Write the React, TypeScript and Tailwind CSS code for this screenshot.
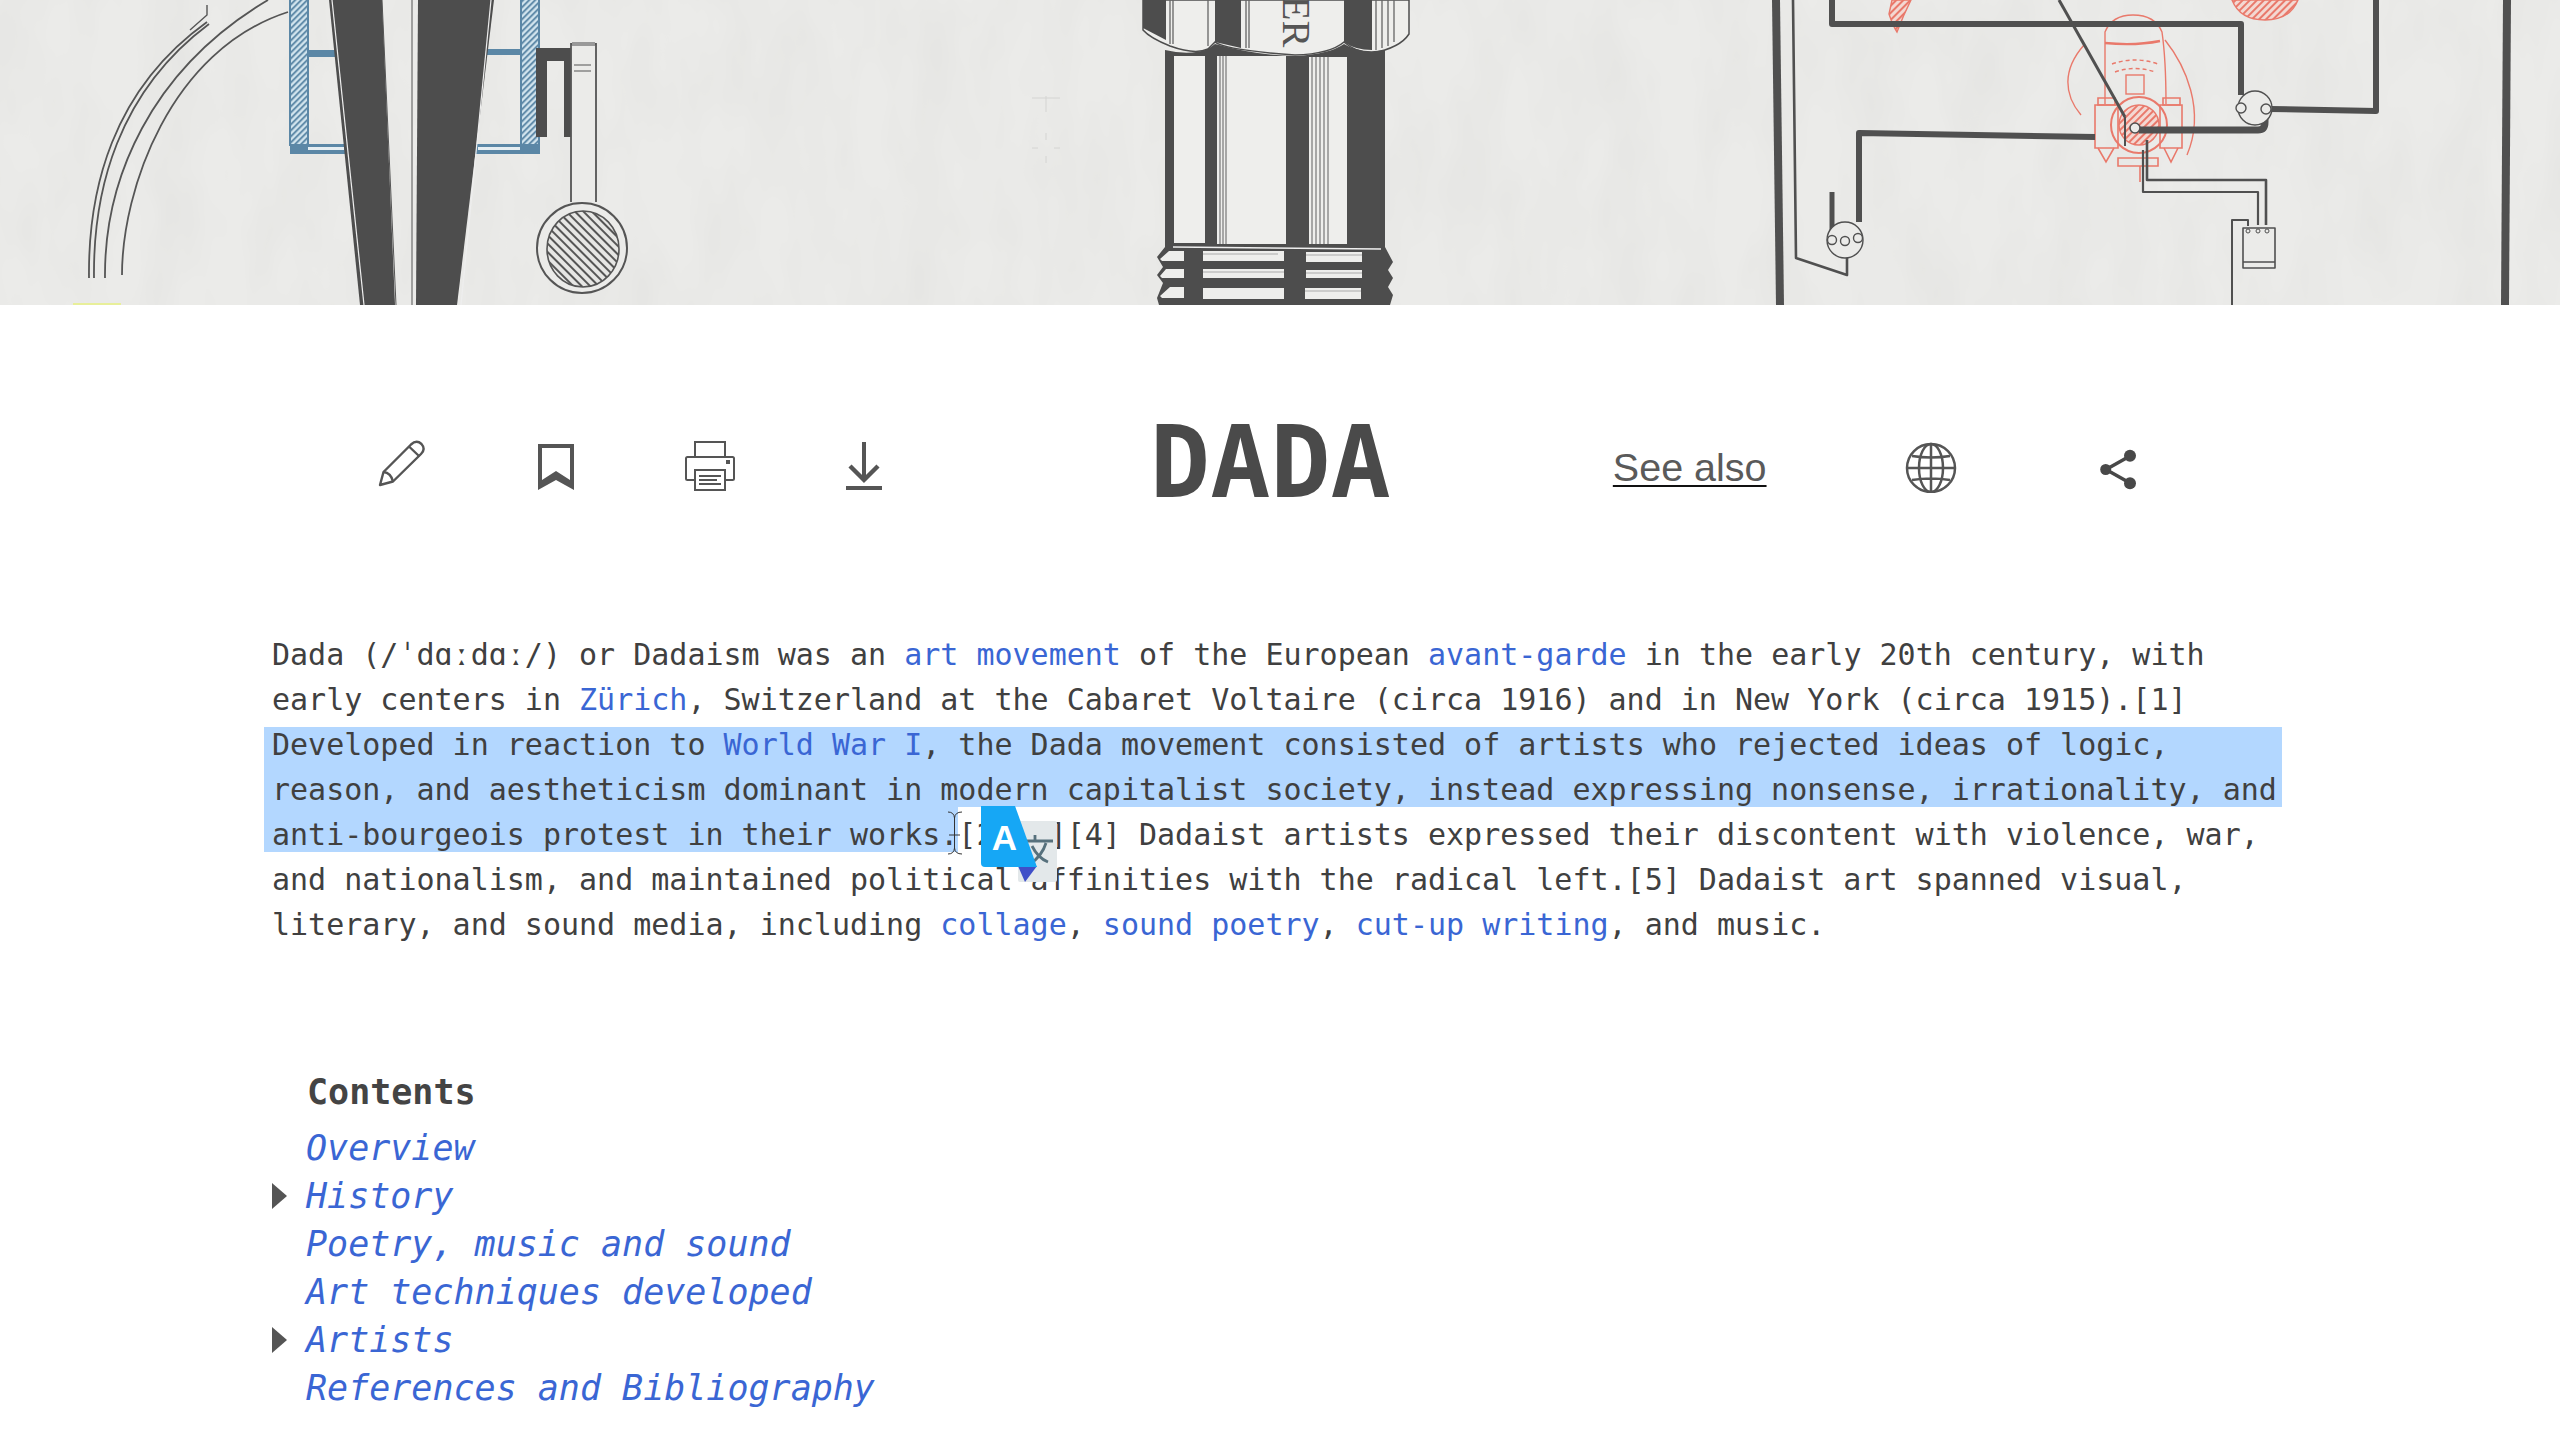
import React from "react";

const DARK = "#4d4d4d";
const RED = "#e9796b";

function Banner() {
  return (
    <svg className="block w-full h-[305px]" viewBox="0 0 2560 305" fill="none">
      <defs>
        <filter id="paper" x="0" y="0" width="100%" height="100%">
          <feTurbulence type="fractalNoise" baseFrequency="0.02 0.008" numOctaves="3" seed="4" />
          <feColorMatrix values="0 0 0 0 0.6  0 0 0 0 0.6  0 0 0 0 0.58  0.3 0 0 0 -0.1" />
        </filter>
        <pattern id="blueHatch" width="7" height="6" patternUnits="userSpaceOnUse" patternTransform="skewY(-45)">
          <rect width="7" height="6" fill="#cfe2ec" />
          <rect width="7" height="2.6" fill="#5b87a6" />
        </pattern>
        <pattern id="ovalHatch" width="6" height="6" patternUnits="userSpaceOnUse" patternTransform="rotate(45)">
          <rect width="6" height="6" fill="#e6e6e4" />
          <rect width="6" height="2" fill="#555" />
        </pattern>
        <pattern id="redHatch" width="5" height="5" patternUnits="userSpaceOnUse" patternTransform="rotate(-45)">
          <rect width="5" height="5" fill="#f3d8d2" />
          <rect width="5" height="2" fill={RED} />
        </pattern>
      </defs>
      <rect width="2560" height="305" fill="#ebebe9" />
      <rect width="2560" height="305" filter="url(#paper)" />

      {/* left: curved pipes */}
      <g stroke="#555" strokeWidth="1.8">
        <path d="M89 278C88 190 112 90 207 22" />
        <path d="M94 278C93 190 118 92 209 24" />
        <path d="M105 278C104 180 150 70 268 0" />
        <path d="M122 275C122 190 170 50 288 12" />
        <path d="M207 5V15L190 30" strokeWidth="1.4" />
      </g>

      {/* left: blue housing */}
      <rect x="290" y="-2" width="18" height="147" fill="url(#blueHatch)" stroke="#5b87a6" strokeWidth="2" />
      <rect x="521" y="-2" width="18" height="147" fill="url(#blueHatch)" stroke="#5b87a6" strokeWidth="2" />
      <rect x="308" y="50" width="30" height="7" fill="#5b87a6" />
      <rect x="485" y="49" width="36" height="6" fill="#5b87a6" />
      <rect x="290" y="144" width="60" height="10" fill="#5b87a6" />
      <rect x="475" y="144" width="65" height="10" fill="#5b87a6" />
      <rect x="308" y="147" width="36" height="3" fill="#e6eef2" />
      <rect x="478" y="147" width="42" height="3" fill="#e6eef2" />

      {/* left: wedges */}
      <path d="M329 0H382L395 305H360Z" fill={DARK} />
      <path d="M418 0H494L457 305H416Z" fill={DARK} />
      <path d="M332 0L364 305" stroke="#eee" strokeWidth="1.2" />
      <path d="M491 0L461 305" stroke="#eee" strokeWidth="1.2" />
      <path d="M382 0L396 305M412 0V305" stroke="#555" strokeWidth="1" />

      {/* left: lever */}
      <path d="M536 48H572V137H564V61H547V137H536Z" fill={DARK} />
      <path d="M571 202V44H596V202" stroke="#555" strokeWidth="1.8" fill="#ebebe9" />
      <path d="M572 44H595" stroke="#999" strokeWidth="4" />
      <path d="M574 65H591M574 71H591" stroke="#555" strokeWidth="1.2" />
      <ellipse cx="582" cy="248" rx="45" ry="45" stroke="#555" strokeWidth="2" fill="#ebebe9" />
      <ellipse cx="583" cy="249" rx="36" ry="38" fill="url(#ovalHatch)" stroke="#555" strokeWidth="1.6" />
      <rect x="73" y="303" width="48" height="2" fill="#e8ef9a" />

      {/* centre: nut */}
      <path d="M1143 0V30Q1150 38 1170 46Q1195 55 1208 49L1215 42Q1225 50 1295 55Q1330 54 1344 42Q1355 52 1372 53Q1400 48 1409 34V0Z" fill="#eeeeec" stroke={DARK} strokeWidth="1.5" />
      <path d="M1143 0H1166V40L1143 28Z" fill={DARK} />
      <path d="M1215 0H1241V48L1215 42Z" fill={DARK} />
      <path d="M1344 0H1372V50Q1355 50 1344 42Z" fill={DARK} />
      <path d="M1170 0V44M1173 0V44M1246 0V48M1249 0V48M1376 0V50M1382 0V48M1388 0V46M1394 0V42M1208 0V46" stroke="#666" strokeWidth="1.3" />
      <text transform="translate(1283 -4) rotate(90)" fontFamily="'Liberation Serif', serif" fontSize="40" fill="#555">ER</text>

      {/* centre: column */}
      <path d="M1165 50Q1190 56 1208 49L1215 44Q1260 56 1295 56Q1330 54 1344 44Q1360 54 1385 50V248H1165Z" fill={DARK} />
      <rect x="1174" y="56" width="31" height="187" fill="#eeeeec" />
      <rect x="1217" y="56" width="69" height="188" fill="#eeeeec" />
      <rect x="1309" y="57" width="38" height="187" fill="#eeeeec" />
      <path d="M1220 56V244M1223 56V244M1226 56V244M1312 57V244M1316 57V244M1320 57V244M1324 57V244M1328 57V244" stroke="#777" strokeWidth="1.2" />

      {/* centre: thread */}
      <path d="M1165 247H1385L1393 262L1388 270L1393 278L1388 287L1393 295L1390 305H1159L1157 298L1163 283L1157 275L1163 267L1157 257Z" fill={DARK} />
      <path d="M1173 247L1381 249" stroke="#eee" strokeWidth="1.5" />
      <path d="M1160 259L1169 251H1184V261H1162ZM1160 276L1166 269H1184V278H1162ZM1160 296L1170 287H1184V298H1162Z" fill="#eeeeec" />
      <rect x="1203" y="251" width="81" height="10" fill="#eeeeec" />
      <rect x="1203" y="269" width="81" height="9" fill="#eeeeec" />
      <rect x="1203" y="288" width="81" height="11" fill="#eeeeec" />
      <rect x="1306" y="252" width="56" height="10" fill="#eeeeec" />
      <rect x="1306" y="270" width="56" height="8" fill="#eeeeec" />
      <rect x="1305" y="288" width="56" height="11" fill="#eeeeec" />
      <path d="M1203 254H1278M1203 272H1284M1306 255H1362M1306 273H1362M1305 291H1361" stroke="#aaa" strokeWidth="1" />
      <path d="M1046 96V112M1032 98H1060M1046 133V140M1032 148H1038M1054 148H1060M1046 156V163" stroke="#d4d4d2" strokeWidth="1" />

      {/* right: red engine */}
      <g stroke={RED} strokeWidth="1.4">
        <path d="M1889 14Q1893 26 1897 32Q1903 16 1911 0H1892Z" fill="url(#redHatch)" />
        <path d="M2232 0Q2240 20 2265 20Q2290 20 2298 0Z" fill="url(#redHatch)" />
        <path d="M2105 104V32Q2112 15 2133 15Q2155 15 2162 32Q2166 60 2166 104" />
        <path d="M2105 43Q2135 46 2160 41" strokeWidth="2.4" />
        <path d="M2084 45C2062 70 2064 95 2081 115" />
        <path d="M2165 40C2185 65 2206 110 2187 155" />
        <path d="M2112 64Q2135 56 2158 64M2115 72Q2135 65 2155 72" strokeDasharray="4 3" />
        <rect x="2126" y="75" width="18" height="19" />
        <circle cx="2139" cy="125" r="28" fill="#ebebe9" strokeWidth="2" />
        <circle cx="2139" cy="125" r="20" fill="url(#redHatch)" />
        <path d="M2095 105H2118V148H2095ZM2160 105H2182V148H2160Z" strokeWidth="1.6" />
        <path d="M2098 105H2115V98H2098ZM2163 105H2180V98H2163ZM2098 148L2106 162L2114 148M2164 148L2171 162L2178 148" strokeWidth="1.6" />
        <path d="M2118 158H2158V166H2118ZM2140 166V182" strokeWidth="1.6" />
      </g>

      {/* right: wiring */}
      <g stroke="#505050" strokeLinejoin="round">
        <path d="M1776 0L1780 305" strokeWidth="8" />
        <path d="M2507 0L2505 305" strokeWidth="8" />
        <path d="M1793 0L1796 258L1847 275V257" strokeWidth="2.6" />
        <path d="M1832 0V24H2241V95" strokeWidth="6" />
        <path d="M2376 0V111L2270 109" strokeWidth="6" />
        <path d="M2059 0L2125 117" strokeWidth="3" />
        <path d="M2095 137L1859 133V222" strokeWidth="6" />
        <path d="M2139 130H2258Q2265 130 2265 122V112" strokeWidth="7" />
        <path d="M2125 117V146" strokeWidth="2" />
        <path d="M2147 140V180H2266V225" strokeWidth="2.6" />
        <path d="M2143 150V192H2258V225" strokeWidth="2.2" />
        <path d="M1832 192V235" strokeWidth="5" />
        <path d="M2248 226V220H2232V305" strokeWidth="2" />
        <path d="M2243 228H2275V268H2243ZM2243 262H2275" strokeWidth="1.6" fill="#ebebe9" />
        <circle cx="2248" cy="231" r="2" strokeWidth="1" fill="#ebebe9" />
        <circle cx="2258" cy="231" r="2" strokeWidth="1" fill="#ebebe9" />
        <circle cx="2267" cy="231" r="2" strokeWidth="1" fill="#ebebe9" />
        <circle cx="1845" cy="240" r="18" strokeWidth="1.4" fill="#ebebe9" />
        <circle cx="1832" cy="240" r="4.5" strokeWidth="1.4" fill="#ebebe9" />
        <circle cx="1845" cy="241" r="4.5" strokeWidth="1.4" fill="#ebebe9" />
        <circle cx="1858" cy="238" r="4.5" strokeWidth="1.4" fill="#ebebe9" />
        <circle cx="2255" cy="108" r="17" strokeWidth="1.4" fill="#ebebe9" />
        <circle cx="2241" cy="108" r="5" strokeWidth="1.4" fill="#ebebe9" />
        <circle cx="2266" cy="109" r="5" strokeWidth="1.4" fill="#ebebe9" />
        <circle cx="2135" cy="128" r="5" strokeWidth="1.6" fill="#ebebe9" />
      </g>
    </svg>
  );
}

const A = ({ children }: { children: React.ReactNode }) => <a className="text-[#3a66d4]">{children}</a>;

function Toolbar() {
  return (
    <div className="flex items-center h-[327px] pb-[11px] pl-[325px] font-['DejaVu_Sans_Mono',monospace]">
      <div className="w-[154px] flex justify-center">
        <svg className="w-[60px] h-[60px]" viewBox="372 433 60 60" fill="none" stroke="#555" strokeWidth="2.4" strokeLinejoin="round">
          <path d="M380 485L383.5 472L411 444.5Q416.5 439.5 421.5 444Q426 449 421 454L393 481.5Z" />
          <path d="M409 446.5L419.5 456.5M383.5 472Q391 473 393 481.5" />
        </svg>
      </div>
      <div className="w-[154px] flex justify-center">
        <svg className="w-[60px] h-[60px]" viewBox="525 433 60 60">
          <path fillRule="evenodd" fill="#555" d="M537 444H573V490L555 480L537 490ZM541 448V480L555 471L569 480V448Z" />
        </svg>
      </div>
      <div className="w-[154px] flex justify-center">
        <svg className="w-[60px] h-[60px]" viewBox="680 433 60 60" fill="none" stroke="#555" strokeWidth="2">
          <rect x="695" y="442" width="30" height="15" />
          <rect x="686" y="457" width="48" height="23" rx="1.5" />
          <rect x="695" y="470" width="30" height="20" fill="#fff" />
          <path d="M699 476H721M699 480H717M699 484H721" />
          <rect x="726" y="460" width="4" height="4" fill="#555" stroke="none" />
        </svg>
      </div>
      <div className="w-[154px] flex justify-center">
        <svg className="w-[60px] h-[60px]" viewBox="836 433 60 60" fill="none" stroke="#555">
          <path d="M866 442V478" strokeWidth="4" />
          <path d="M852 466L866 480L880 466" strokeWidth="4.4" />
          <path d="M848 488H884" strokeWidth="4" />
        </svg>
      </div>
      <h1 className="ml-[209px] text-[100px] leading-[116px] font-bold text-[#4a4a4a] whitespace-nowrap">DADA</h1>
      <a className="ml-[222px] mt-[8px] font-['Liberation_Sans',sans-serif] text-[39.5px] leading-[46px] text-[#5a5a5a] underline decoration-[#111] decoration-2 underline-offset-[4px] whitespace-nowrap">See also</a>
      <div className="ml-[134px] flex justify-center">
        <svg className="w-[60px] h-[60px]" viewBox="1901 433 60 60" fill="none" stroke="#555" strokeWidth="2.5">
          <circle cx="1931" cy="468" r="24" />
          <ellipse cx="1931" cy="468" rx="12" ry="24" />
          <path d="M1931 444V492M1907 468H1955M1912 456Q1931 459 1950 456M1912 480Q1931 477 1950 480" />
        </svg>
      </div>
      <div className="ml-[127px] flex justify-center">
        <svg className="w-[60px] h-[60px]" viewBox="2088 433 60 60" fill="#484848" stroke="#484848">
          <path d="M2130 456L2106 469.5L2130 483" fill="none" strokeWidth="3.5" />
          <circle cx="2105.7" cy="469.5" r="5.5" stroke="none" />
          <circle cx="2130" cy="455.7" r="6" stroke="none" />
          <circle cx="2130" cy="483.3" r="6" stroke="none" />
        </svg>
      </div>
    </div>
  );
}

function Article() {
  return (
    <div className="relative ml-[264px] w-[2018px] text-[30px] leading-[45px] text-[#404040] whitespace-nowrap font-['DejaVu_Sans_Mono',monospace]">
      <div className="pl-[8px]">Dada (/ˈdɑːdɑː/) or Dadaism was an <A>art movement</A> of the European <A>avant-garde</A> in the early 20th century, with</div>
      <div className="pl-[8px]">early centers in <A>Zürich</A>, Switzerland at the Cabaret Voltaire (circa 1916) and in New York (circa 1915).[1]</div>
      <div className="pl-[8px] mt-[5px] leading-[35px] pb-[5px] bg-[#b3d7ff]">Developed in reaction to <A>World War I</A>, the Dada movement consisted of artists who rejected ideas of logic,</div>
      <div className="pl-[8px] h-[40px] bg-[#b3d7ff]">reason, and aestheticism dominant in modern capitalist society, instead expressing nonsense, irrationality, and</div>
      <div className="mt-[5px]"><span className="pl-[8px] pt-[10px] bg-[#b3d7ff]">anti-bourgeois protest in their works.</span>[2][3][4] Dadaist artists expressed their discontent with violence, war,</div>
      <div className="pl-[8px]">and nationalism, and maintained political affinities with the radical left.[5] Dadaist art spanned visual,</div>
      <div className="pl-[8px]">literary, and sound media, including <A>collage</A>, <A>sound poetry</A>, <A>cut-up writing</A>, and music.</div>
    </div>
  );
}

function Contents() {
  const items: [string, boolean][] = [
    ["Overview", false],
    ["History", true],
    ["Poetry, music and sound", false],
    ["Art techniques developed", false],
    ["Artists", true],
    ["References and Bibliography", false],
  ];
  return (
    <div className="mt-[121px] ml-[272px] text-[35px] leading-[48px] whitespace-nowrap font-['DejaVu_Sans_Mono',monospace]">
      <div className="ml-[35px] font-bold text-[#444] mb-[8px]">Contents</div>
      {items.map(([label, arrow]) => (
        <div key={label} className="flex items-center">
          <div className="w-[34px]">
            {arrow && (
              <svg className="w-[15px] h-[26px] block" viewBox="0 0 15 26">
                <path d="M0 0L15 13L0 26Z" fill="#555" />
              </svg>
            )}
          </div>
          <a className="italic text-[#3a66d4]">{label}</a>
        </div>
      ))}
    </div>
  );
}

function Overlay() {
  return (
    <>
      <svg className="absolute left-[945px] top-[808px] w-[22px] h-[50px]" viewBox="945 808 22 50" fill="none" stroke="#333" strokeWidth="1">
        <path d="M948 812Q954 812 954.5 818V848Q954 854 948 854M962 812Q955 812 954.5 818M962 854Q955 854 954.5 848M949 835H960" />
      </svg>
      <svg className="absolute left-[975px] top-[800px] w-[90px] h-[90px]" viewBox="975 800 90 90">
        <rect x="1018" y="821" width="39" height="61" rx="2" fill="#e3e8ea" />
        <path d="M1035 835V841M1027 841H1053M1046 843Q1042 856 1030 864M1032 846Q1038 858 1048 862" fill="none" stroke="#56707c" strokeWidth="2.8" />
        <path d="M1018 866H1037L1025 882Z" fill="#3f4fc8" />
        <path d="M981 806H1015L1037 867H985Q981 867 981 863Z" fill="#16a7f5" />
        <text x="1004.5" y="850" textAnchor="middle" fontFamily="'Liberation Sans', sans-serif" fontWeight="bold" fontSize="35" fill="#fff">A</text>
      </svg>
    </>
  );
}

export default function App() {
  return (
    <div className="relative w-[2560px] h-[1440px] bg-white overflow-hidden">
      <Banner />
      <Toolbar />
      <Article />
      <Contents />
      <Overlay />
    </div>
  );
}
